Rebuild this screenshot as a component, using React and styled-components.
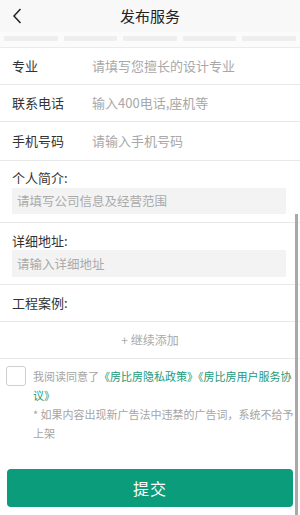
import React from 'react';
import styled, { createGlobalStyle } from 'styled-components';

const GlobalStyle = createGlobalStyle`
  html, body {
    margin: 0;
    padding: 0;
    background: #ffffff;
  }
  body {
    font-family: "Noto Sans CJK SC", "Noto Sans", sans-serif;
    color: #333;
  }
  * { box-sizing: border-box; }
`;

const Page = styled.div`
  position: relative;
  width: 300px;
  height: 515px;
  overflow: hidden;
  background: #fff;
  display: flex;
  flex-direction: column;
`;

const Header = styled.div`
  height: 32px;
  flex: none;
  display: flex;
  align-items: center;
  justify-content: center;
  position: relative;
  background: #f8f8f8;
  font-size: 15px;
  line-height: 20px;
  color: #222;
`;

const BackButton = styled.div`
  position: absolute;
  left: 12px;
  top: 7px;
  width: 14px;
  height: 18px;
  display: flex;
  align-items: center;
`;

const Strip = styled.div`
  height: 16px;
  flex: none;
  display: flex;
  gap: 6px;
  padding: 4px 4px 0;
  background: #fbfbfb;
  border-bottom: 1px solid #ebebeb;
`;

const Tile = styled.div`
  flex: 1;
  height: 5px;
  background: #eeeeee;
  border-radius: 1px;
`;

const Row = styled.div`
  height: ${(p) => p.h || 37}px;
  flex: none;
  display: flex;
  align-items: center;
  padding: 0 12px;
  border-bottom: 1px solid #e8e8e8;
  font-size: 13px;
  line-height: 18px;
`;

const Label = styled.div`
  width: 80px;
  color: #333;
`;

const Placeholder = styled.div`
  color: #a8a8a8;
`;

const Block = styled.div`
  flex: none;
  padding: ${(p) => p.pt}px 14px ${(p) => p.pb}px 12px;
  border-bottom: 1px solid #e8e8e8;
  display: flex;
  flex-direction: column;
  gap: ${(p) => p.gap}px;
`;

const BlockLabel = styled.div`
  font-size: 13px;
  line-height: 18px;
  color: #333;
`;

const InputBox = styled.div`
  height: ${(p) => p.h}px;
  background: #f3f3f3;
  display: flex;
  align-items: center;
  padding: 0 5px;
  font-size: 12.5px;
  line-height: 16px;
  color: #aaa;
`;

const AddRow = styled.div`
  height: 37px;
  flex: none;
  display: flex;
  align-items: center;
  justify-content: center;
  border-bottom: 1px solid #e8e8e8;
  font-size: 12px;
  line-height: 16px;
  color: #aaa;
`;

const Agreement = styled.div`
  flex: none;
  display: flex;
  gap: 7px;
  padding: 7px 4px 0 6px;
`;

const CheckBox = styled.div`
  width: 20px;
  height: 20px;
  flex: none;
  border: 1px solid #cfcfcf;
  border-radius: 3px;
  background: #fff;
`;

const AgreementText = styled.div`
  font-size: 11px;
  line-height: 19px;
  color: #a5a5a5;
  padding-top: 1px;
`;

const Link = styled.span`
  color: #1b9a78;
`;

const Note = styled.div`
  margin-top: 0;
`;

const Footer = styled.div`
  margin-top: auto;
  padding: 0 7px 8px;
`;

const SubmitButton = styled.button`
  width: 100%;
  height: 38px;
  border: none;
  border-radius: 4px;
  background: #0b9c7b;
  color: #fff;
  font-family: inherit;
  font-size: 16px;
  letter-spacing: 1px;
`;

const ScrollBar = styled.div`
  position: absolute;
  right: 2px;
  top: 214px;
  bottom: 0;
  width: 3px;
  background: #a9a9a9;
`;

export default function App() {
  return (
    <>
      <GlobalStyle />
      <Page>
        <Header>
          <BackButton>
            <svg width="10" height="16" viewBox="0 0 10 16">
              <path d="M8.5 1 L2 8 L8.5 15" fill="none" stroke="#222" strokeWidth="1.5" />
            </svg>
          </BackButton>
          发布服务
        </Header>
        <Strip>
          <Tile />
          <Tile />
          <Tile />
          <Tile />
          <Tile />
        </Strip>
        <Row h={37}>
          <Label>专业</Label>
          <Placeholder>请填写您擅长的设计专业</Placeholder>
        </Row>
        <Row h={37}>
          <Label>联系电话</Label>
          <Placeholder>输入400电话,座机等</Placeholder>
        </Row>
        <Row h={39}>
          <Label>手机号码</Label>
          <Placeholder>请输入手机号码</Placeholder>
        </Row>
        <Block pt={8} pb={8} gap={1}>
          <BlockLabel>个人简介:</BlockLabel>
          <InputBox h={26}>请填写公司信息及经营范围</InputBox>
        </Block>
        <Block pt={9} pb={7} gap={0}>
          <BlockLabel>详细地址:</BlockLabel>
          <InputBox h={27}>请输入详细地址</InputBox>
        </Block>
        <Row h={37}>
          <BlockLabel>工程案例:</BlockLabel>
        </Row>
        <AddRow>+ 继续添加</AddRow>
        <Agreement>
          <CheckBox />
          <AgreementText>
            我阅读同意了<Link>《房比房隐私政策》《房比房用户服务协议》</Link>
            <Note>* 如果内容出现新广告法中违禁的广告词，系统不给予上架</Note>
          </AgreementText>
        </Agreement>
        <Footer>
          <SubmitButton>提交</SubmitButton>
        </Footer>
        <ScrollBar />
      </Page>
    </>
  );
}
